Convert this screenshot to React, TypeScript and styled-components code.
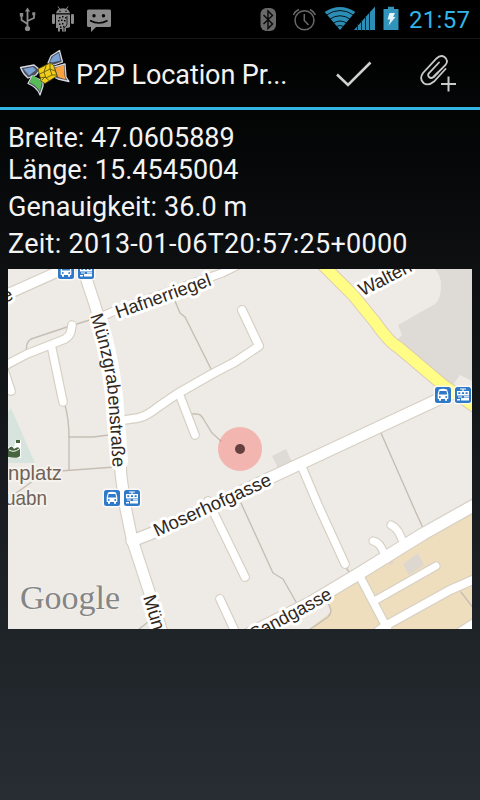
import React from 'react';
import styled, { createGlobalStyle } from 'styled-components';

const GlobalStyle = createGlobalStyle`
  html, body { margin: 0; padding: 0; background: #000; }
  body { width: 480px; height: 800px; overflow: hidden; }
`;

const Screen = styled.div`
  display: flex;
  flex-direction: column;
  width: 480px;
  height: 800px;
  overflow: hidden;
  background: linear-gradient(#000 0%, #030404 14%, #0d0f11 33%, #272d33 100%);
  font-family: Roboto, sans-serif;
  color: #f3f3f3;
`;

const StatusBar = styled.header`
  display: flex;
  align-items: center;
  justify-content: space-between;
  box-sizing: border-box;
  height: 38px;
  background: #000;
`;

const StatusRight = styled.div`
  display: flex;
  flex: none;
  gap: 8px;
`;

const StatusIcons = styled.svg`
  display: block;
  flex: none;
  height: 38px;
`;

const Clock = styled.span`
  width: 71px;
  font-size: 24px;
  line-height: 38px;
  color: #33b5e5;
  letter-spacing: 0.3px;
  white-space: nowrap;
  padding-top: 1px;
`;

const ActionBar = styled.nav`
  display: flex;
  align-items: center;
  box-sizing: border-box;
  height: 72px;
  border-top: 1px solid #151515;
  border-bottom: 3px solid #33b5e5;
  background: linear-gradient(#000, #050607);
`;

const AppIcon = styled.svg`
  flex: none;
  width: 52px;
  height: 50px;
  margin-left: 19px;
`;

const Title = styled.h1`
  margin: 0 0 0 5px;
  width: 236px;
  font-size: 27px;
  font-weight: 400;
  line-height: 34px;
  letter-spacing: -0.1px;
  white-space: nowrap;
  padding-top: 3px;
`;

const ActionButton = styled.button<{ $gap?: number }>`
  display: flex;
  flex: none;
  padding: 0;
  margin: 0 0 0 ${(p) => p.$gap ?? 0}px;
  border: 0;
  background: none;
`;

const Content = styled.main`
  display: flex;
  flex-direction: column;
  padding: 12px 8px 0;
`;

const Details = styled.section`
  display: flex;
  flex-direction: column;
  gap: 5px;
  height: 147px;
`;

const Detail = styled.div<{ $spacing?: number }>`
  font-size: 27px;
  line-height: 32px;
  letter-spacing: ${(p) => p.$spacing ?? 0}px;
  white-space: pre;
`;

const MapView = styled.svg`
  display: block;
  width: 464px;
  height: 360px;
`;

const roads: { d: string; w: number }[] = [
  { d: 'M0 298L8 294L57 272L82 262', w: 9.5 },
  { d: 'M98 318L117 310L222 273L240 264', w: 7.5 },
  { d: 'M0 368L8 364L27 354L50 345L65 339Q70 336 71 331L72 325', w: 7.5 },
  { d: 'M52 349L63 402', w: 7.5 },
  { d: 'M2 364L11 391', w: 7.5 },
  { d: 'M242 310L259 346L235 362L212 374L177 394L158 407Q147 416 138 418L117 421', w: 7.8 },
  { d: 'M180 396L195 435', w: 7.5 },
  { d: 'M132 541L160 530L272 477L315 457L377 428L452 393', w: 11 },
  { d: 'M301 465L318 505L345 564', w: 7.5 },
  { d: 'M208 501L245 577', w: 7.5 },
  { d: 'M220 599L239 640', w: 7.5 },
  { d: 'M373 541Q378 542 381 547L387 559', w: 7 },
  { d: 'M391 525Q397 528 400 535L405 546', w: 7 },
  { d: 'M358 573L388 630', w: 7.5 },
  { d: 'M376 600L436 566', w: 7 },
  { d: 'M377 632L385 626L450 590L480 577', w: 8 },
  { d: 'M455 636L480 620', w: 9 },
  { d: 'M235 641L310 603L360 573L423 534L480 502', w: 11.5 },
  { d: 'M80 260L84 272L95 305C107 345 115 385 119 438L121 475L125 505L132 539L148 588L163 635', w: 10.5 },
];

const paths = [
  'M26 351L27 344Q29 339 34 338L67 327L93 319',
  'M175 301L180 313L185 317L211 369',
  'M192 414H197Q201 414 204 420L212 433L221 441',
  'M65 405Q69 420 69 437V470',
  'M69 437H93L109 435',
  'M60 471L115 467',
  'M12 496L33 481',
  'M381 433L417 515L423 528',
  'M345 566L349 572',
  'M241 503L273 573L283 579L296 602',
  'M461 592L474 609',
  'M138 630L148 622',
  'M327 600L331 610Q331 614 328 617L309 630',
];

const Transit = ({ x, y, tram }: { x: number; y: number; tram?: boolean }) => (
  <g transform={`translate(${x} ${y})`}>
    <rect x="-1.5" y="-1.5" width="19" height="19" rx="4" fill="#fff" opacity=".75" />
    <rect width="16" height="16" rx="2.5" fill="#2f79c9" />
    {tram ? (
      <g fill="#fff">
        <path d="M5 1.5h6v1H8.6V4H14v4.5H2V4h5.4V2.5H5z" />
        <path d="M3.3 5.2h2v1.8h-2zM7 5.2h2v1.8H7zM10.6 5.2h2v1.8h-2z" fill="#2f79c9" />
        <path d="M3 9.6h4v1H3zM6 11h8v2.4H6zM2 12h3v1.4H2zM9 9.2h5v1.2H9z" />
      </g>
    ) : (
      <g fill="#fff">
        <path d="M4 2.5Q8 1 12 2.5L13.3 7v5H12v1.8h-2V12H6v1.8H4V12H2.7V7z" />
        <path d="M4.6 4h6.8l.8 3.6H3.8z" fill="#2f79c9" />
        <circle cx="4.8" cy="10" r=".9" fill="#2f79c9" />
        <circle cx="11.2" cy="10" r=".9" fill="#2f79c9" />
      </g>
    )}
  </g>
);

const StreetLabel = styled.text`
  font-family: 'Liberation Sans', Arial, sans-serif;
  font-size: 18.5px;
  fill: #30281c;
  stroke: #fff;
  stroke-width: 6px;
  stroke-linejoin: round;
  paint-order: stroke;
`;

const CurvedHalo = styled.path`
  fill: none;
  stroke: #fff;
  stroke-width: 18px;
  stroke-linecap: round;
`;

const CurvedLabel = styled(StreetLabel)`
  stroke: none;
`;

const StopLabel = styled(StreetLabel)`
  font-size: 21px;
  fill: #706156;
  stroke: #f5f3f0;
  stroke-width: 4px;
  text-anchor: end;
`;

const Watermark = styled.text`
  font-family: 'Liberation Serif', serif;
  font-size: 34px;
  fill: #858585;
  stroke: #f4f2ef;
  stroke-width: 1.5px;
  paint-order: stroke;
`;

const LocationMap = () => (
  <MapView viewBox="8 269 464 360">
    <rect x="8" y="269" width="464" height="360" fill="#eeebe6" />
    <path d="M435 269Q441 276 441 285Q441 300 435 304L398 325L402 335L397 340L452 386L460 375L472 381V269z" fill="#dedbd7" />
    <path d="M8 412L11 408L35 463H8z" fill="#d7e4de" />
    <path d="M272 456L286 449L292 462L278 468z" fill="#dedbd7" />
    <path d="M472 507L327 597L331 612L309 629H472z" fill="#eedebd" />
    <path d="M403 564L418 553L424 565L409 575z" fill="#ddd7d0" />
    <path d="M387 563L392 560L394 563L390 565z" fill="#e4d5c4" />
    <g fill="none" strokeLinecap="round" strokeLinejoin="round">
      {paths.map((d) => <path key={d} d={d} stroke="#c6beb4" strokeWidth="1.4" />)}
      {roads.map((r) => <path key={r.d} d={r.d} stroke="#d6cfc3" strokeWidth={r.w + 2.3} />)}
      <path d="M322 264L353 295L375 322Q390 343 398 347L443 385L480 410" stroke="#dbcbb4" strokeWidth="13" />
      {roads.map((r) => <path key={r.d} d={r.d} stroke="#fff" strokeWidth={r.w} />)}
      <path d="M322 264L353 295L375 322Q390 343 398 347L443 385L480 410" stroke="#fffd86" strokeWidth="11" />
    </g>
    <path d="M6 449Q11 444 14 447L16 440H21V458H6z" fill="#fff" />
    <path d="M8 449Q12 444 14 449Q19 445 20 450V456Q18 459 8 457zM16 440h4v3h-4z" fill="#47653f" />
    <path d="M9 450Q14 453 19 449" stroke="#fff" strokeWidth="1" fill="none" />
    <StopLabel x="62" y="480" textLength="54" lengthAdjust="spacingAndGlyphs">nplatz</StopLabel>
    <StopLabel x="47" y="505" textLength="42" lengthAdjust="spacingAndGlyphs">uabn</StopLabel>
    <StreetLabel transform="translate(5 303) rotate(-25)">e</StreetLabel>
    <StreetLabel transform="translate(118 318.5) rotate(-19.5)" textLength="100" lengthAdjust="spacingAndGlyphs">Hafnerriegel</StreetLabel>
    <StreetLabel transform="translate(362.5 296.5) rotate(-27)">Walten</StreetLabel>
    <StreetLabel transform="translate(157 537) rotate(-24.5)" textLength="127" lengthAdjust="spacingAndGlyphs">Moserhofgasse</StreetLabel>
    <StreetLabel transform="translate(254 641) rotate(-28.5)" textLength="90" lengthAdjust="spacingAndGlyphs">Sandgasse</StreetLabel>
    <StreetLabel transform="translate(143 597) rotate(73)">Münz</StreetLabel>
    <path id="street-curve" d="M90 316C98 339 105 365 108 395C110 425 112 445 113 480" fill="none" />
    <CurvedHalo d="M98 319C105 341 111 367 114 396C116 425 118 443 119 462" />
    <CurvedLabel>
      <textPath href="#street-curve" textLength="154" lengthAdjust="spacingAndGlyphs">Münzgrabenstraße</textPath>
    </CurvedLabel>
    <Transit x={58} y={263} />
    <Transit x={78} y={263} tram />
    <Transit x={435} y={387} />
    <Transit x={455} y={387} tram />
    <Transit x={104} y={490} />
    <Transit x={124} y={490} tram />
    <Watermark x="20" y="609" textLength="100" lengthAdjust="spacingAndGlyphs">Google</Watermark>
    <circle cx="240" cy="449" r="22" fill="#f9645f" fillOpacity=".4" />
    <circle cx="240" cy="449" r="5" fill="#64403e" />
  </MapView>
);

const NotificationIcons = () => (
  <StatusIcons width="130" viewBox="0 0 130 38">
    <g stroke="#8b8b8b" fill="none" strokeWidth="1.8">
      <path d="M27.5 29V10M27.5 24L21.5 20V15M27.5 21L34 18V14" />
      <path d="M27.5 7.5l2.6 4h-5.2zM19.8 13h3.4v3.4h-3.4zM32.3 12.2h3v3h-3z" fill="#8b8b8b" stroke="none" />
      <circle cx="27.5" cy="28.5" r="2.6" fill="#8b8b8b" stroke="none" />
    </g>
    <g fill="#8b8b8b">
      <path d="M56 13.3Q57 8.5 63 8.3Q69 8.5 70 13.3zM56 14.5H70V27Q69 28 66 28V31.5H62V29H60V31.5H58V28H56z" />
      <rect x="52" y="14" width="3" height="10" rx="1.3" />
      <rect x="71" y="14" width="3" height="10" rx="1.3" />
      <path d="M58 6.5l2 3M68 6.5l-2 3" stroke="#8b8b8b" strokeWidth="1" />
    </g>
    <g fill="#080808">
      <circle cx="60" cy="11.2" r=".8" />
      <circle cx="66" cy="11.2" r=".8" />
      <path d="M59 17h1.5v1.5H59zM62 16h1.5v1.5H62zM65 17h1.5v1.5H65zM58 20h1.5v1.5H58zM61 19.5h1.5V21H61zM64 20h1.5v1.5H64zM59 23.5h1.5V25H59zM62 23h1.5v1.5H62zM60 26.5h1.5V28H60zM63 26h1.5v1.5H63z" />
    </g>
    <path d="M67 16v8q0 2-3 4v3" fill="none" stroke="#222" strokeWidth="1" />
    <path d="M88.500 9.500H109.500Q111 9.500 111 11V25.500Q111 27 109.500 27H96L91 32V27H88.500Q87 27 87 25.500V11Q87 9.500 88.500 9.500z" fill="#8b8b8b" />
    <circle cx="94" cy="15.800" r="1.700" fill="#050505" />
    <circle cx="103.500" cy="15.800" r="1.700" fill="#050505" />
    <path d="M90 20.500Q99 25.500 107.500 20.500" stroke="#050505" strokeWidth="1.600" fill="none" />
  </StatusIcons>
);

const SystemIcons = () => (
  <StatusIcons width="146" viewBox="255 0 146 38">
    <rect x="260.500" y="8" width="15.500" height="23" rx="6" fill="#696969" />
    <path d="M263.500 15L272.500 24L268 28.500V11L272.500 15.500L263.500 24" stroke="#080808" strokeWidth="1.400" fill="none" />
    <g fill="none" stroke="#696969" strokeWidth="1.500">
      <circle cx="304.500" cy="20.300" r="9.500" />
      <path d="M304.300 14V20.500L308.500 25M293.500 15Q294.500 11.500 299 9.500M310 9.500Q314 11.500 315.500 15" />
    </g>
    <path d="M340 30L324.700 12Q340 2 355.300 12z" fill="#2c8eb5" />
    <path d="M326.500 15Q340 6 353.500 15M330 19Q340 12.500 350 19M333.500 23Q340 19 346.500 23M336 26.500Q340 24.500 344 26.500" stroke="#06151b" strokeWidth="1" fill="none" />
    <path d="M354 30L375 6.500V30z" fill="#2c8eb5" />
    <path d="M357.500 24V31M361.500 20V31M365.500 16V31M369.500 12V31" stroke="#072530" strokeWidth="1" />
    <path d="M388 6.700H394V9H398.500V30H383.500V9H388z" fill="#3294bb" />
    <path d="M389.500 13H395L393.200 17H395.500L388.500 25.500L390.200 19.500H387.500z" fill="#e4f4fa" />
  </StatusIcons>
);

const Logo = () => (
  <AppIcon viewBox="19 49 52 50">
    <g stroke="#d5d9e3" strokeWidth="1.3" strokeLinejoin="round" fill="#4a4f5a">
      <path d="M20.500 68.500L34 66L40 71L36 76L28 79Q23 75 20.500 68.500z" />
      <path d="M48 64L51 57L59.500 51.500L62.500 63L54 66z" />
      <path d="M32 77L28 84.500Q37 88 40 96L43 87L43 82z" />
      <path d="M54 68L65 65L66 78L69 82.500L58 80L54 78z" />
    </g>
    <path d="M23.500 70L33 68L36 71L29 76.500z" fill="#7aa2d4" />
    <path d="M50 62.500L53 57.500L58.500 54L60.500 61.500L52 63.500z" fill="#7aa2d4" />
    <path d="M33 76L29.500 83.500Q36 86 40 92.500L42 83z" fill="#57bd58" />
    <path d="M55 69L64 66L64.500 77L66 80.500L58 78z" fill="#f9a43e" />
    <path d="M38 70L50 64L53.500 66L57 77L45 84.500L41 82z" fill="#efcf19" stroke="#4d4612" strokeWidth=".8" />
    <path d="M39.500 75L44 73L46 67M42 81L45 78L49 81.500M50 65L50 70L55 72M44 73L50 70L52 76L46 79zM40 79L45 78M52 76L56 76" stroke="#65590d" strokeWidth=".9" fill="none" />
  </AppIcon>
);

export default function App() {
  return (
    <Screen>
      <GlobalStyle />
      <StatusBar>
        <NotificationIcons />
        <StatusRight>
          <SystemIcons />
          <Clock>21:57</Clock>
        </StatusRight>
      </StatusBar>
      <ActionBar>
        <Logo />
        <Title>P2P Location Pr...</Title>
        <ActionButton $gap={22} aria-label="OK">
          <svg width="40" height="34" viewBox="334 56 40 34">
            <path d="M337 74.500L348 85L370.500 62.500" stroke="#d0d0d0" strokeWidth="2.600" fill="none" />
          </svg>
        </ActionButton>
        <ActionButton $gap={44} aria-label="Attach">
          <svg width="42" height="42" viewBox="418 52.500 42 42">
            <g fill="none" stroke="#c9c9c9" strokeWidth="1.800" strokeLinecap="round">
              <path d="M445.500 69.500L434 82Q428 87 423.500 83.500Q419 79 423 73.500L436.500 59Q440.500 55 444.500 57.500Q449 61 445.500 65.500L433.500 77.500Q431 79.500 429 77.500Q427 75.500 429.500 73L439 63" />
              <path d="M433.500 77.500L438 73" />
              <path d="M441 84.500H456M448.500 77V92" strokeLinecap="butt" strokeWidth="2" />
            </g>
          </svg>
        </ActionButton>
      </ActionBar>
      <Content>
        <Details>
          <Detail>{'Breite: 47.0605889\nLänge: 15.4545004'}</Detail>
          <Detail $spacing={0.05}>Genauigkeit: 36.0 m</Detail>
          <Detail $spacing={0.28}>Zeit: 2013-01-06T20:57:25+0000</Detail>
        </Details>
        <LocationMap />
      </Content>
    </Screen>
  );
}
